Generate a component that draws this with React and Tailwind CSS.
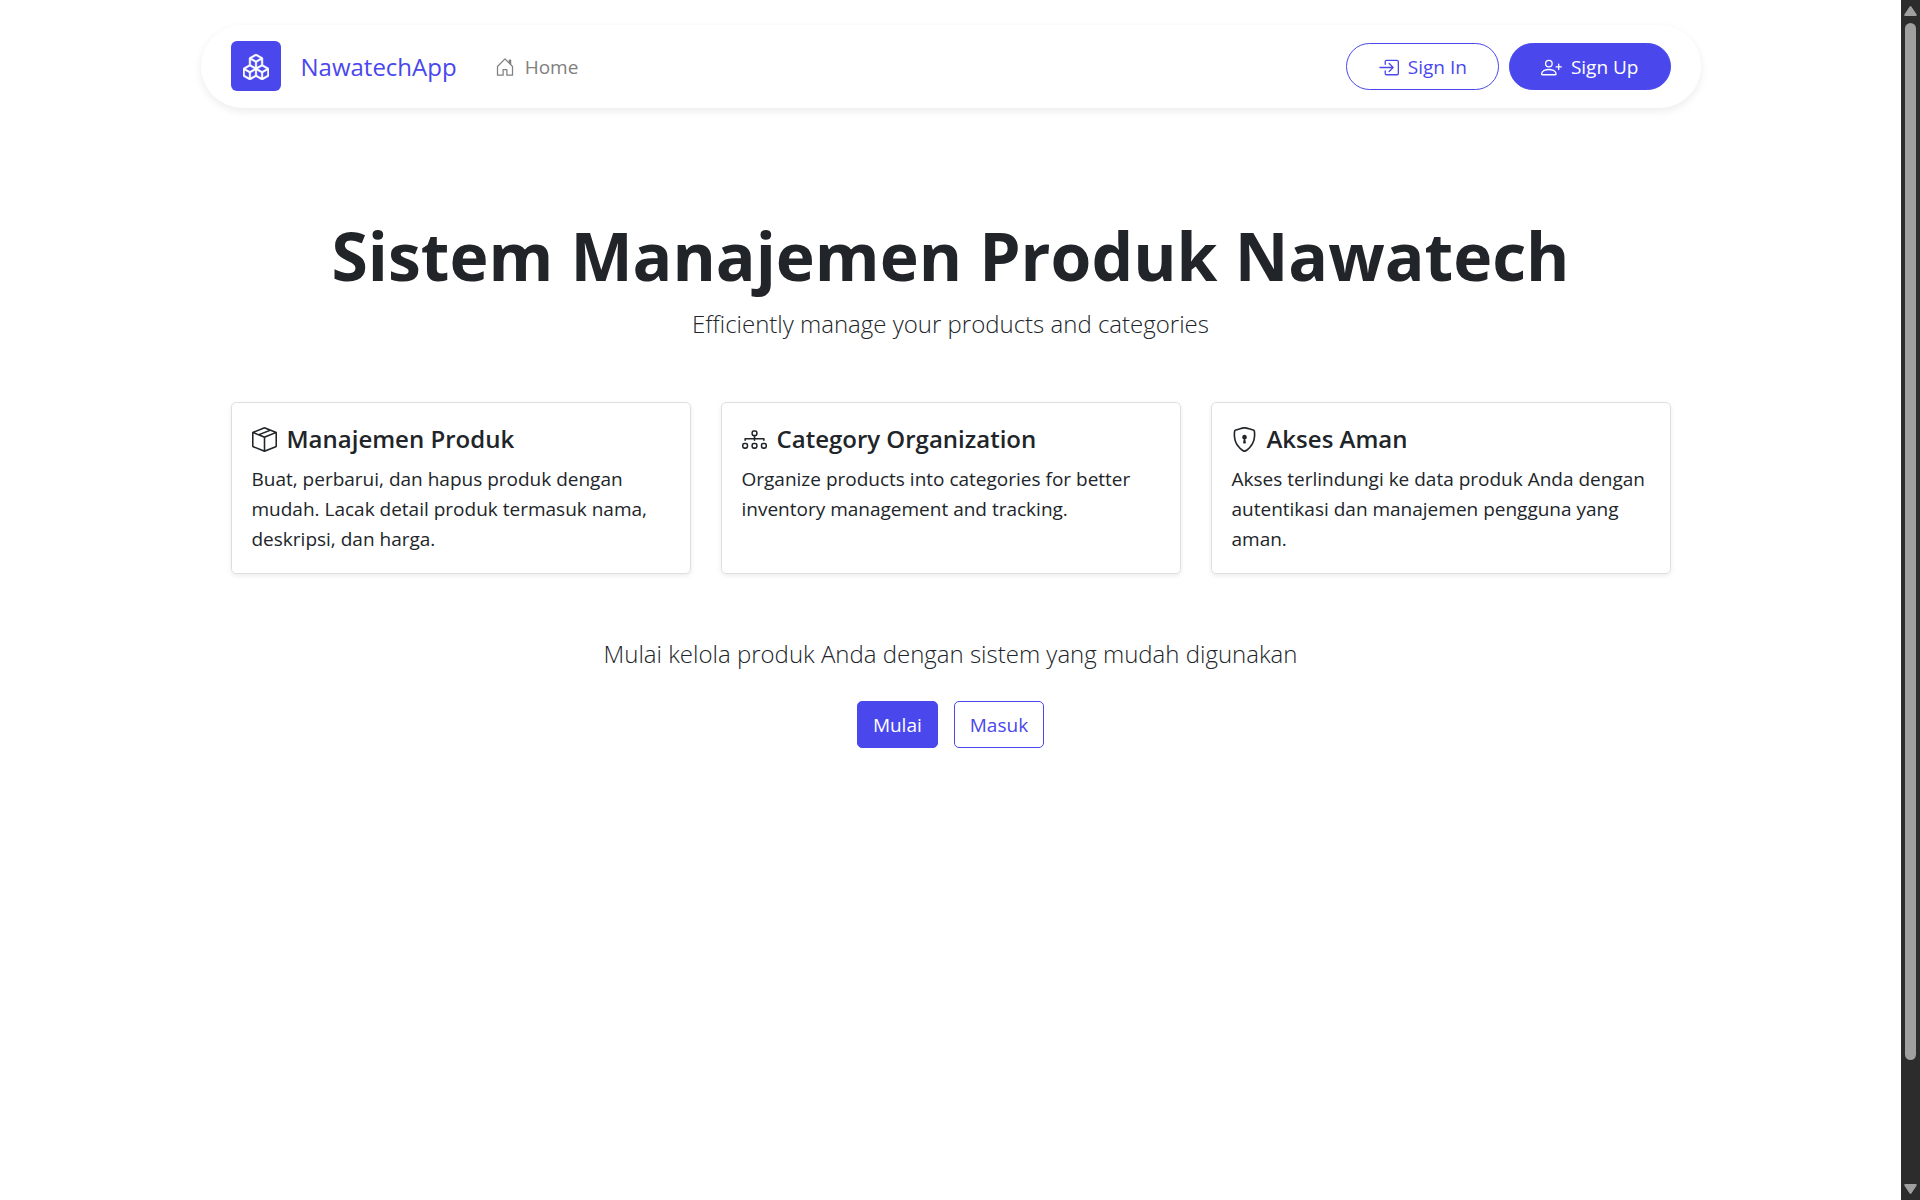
import { BsBoxes, BsHouseDoor, BsBoxArrowInRight, BsPersonPlus, BsBoxSeam, BsDiagram3, BsShieldLock } from "react-icons/bs";

const features = [
  {
    Icon: BsBoxSeam,
    title: "Manajemen Produk",
    text: "Buat, perbarui, dan hapus produk dengan mudah. Lacak detail produk termasuk nama, deskripsi, dan harga.",
  },
  {
    Icon: BsDiagram3,
    title: "Category Organization",
    text: "Organize products into categories for better inventory management and tracking.",
  },
  {
    Icon: BsShieldLock,
    title: "Akses Aman",
    text: "Akses terlindungi ke data produk Anda dengan autentikasi dan manajemen pengguna yang aman.",
  },
];

function Navbar() {
  return (
    <nav className="mx-auto flex w-full max-w-[1500px] items-center rounded-full px-[30px] pt-4 pb-[17px] shadow-[0_3px_8px_rgba(0,0,0,0.08)]">
      <a href="#" className="flex items-center gap-5 text-2xl text-[#4a47ed]">
        <span className="flex size-[50px] items-center justify-center rounded-md bg-[#4a47ed] pt-0.5 text-white">
          <BsBoxes className="size-[26px]" stroke="currentColor" strokeWidth="0.3" />
        </span>
        <span className="pt-0.5">NawatechApp</span>
      </a>
      <a href="#" className="ml-[38px] flex items-center gap-2.5 pt-0.5 text-[19px] text-[#808080]">
        <BsHouseDoor className="size-5" />
        Home
      </a>
      <div className="ml-auto flex gap-2.5 text-[19px] leading-[29px]">
        <a href="#" className="flex items-center gap-[9px] rounded-full border border-[#4a47ed] px-[31px] pt-[9px] pb-[7px] text-[#4a47ed]">
          <BsBoxArrowInRight className="size-[21px]" />
          Sign In
        </a>
        <a href="#" className="flex items-center gap-[9px] rounded-full border border-[#4a47ed] bg-[#4a47ed] px-[31px] pt-[9px] pb-[7px] font-medium text-white">
          <BsPersonPlus className="size-[21px]" />
          Sign Up
        </a>
      </div>
    </nav>
  );
}

function Scrollbar() {
  return (
    <div aria-hidden="true" className="flex w-[19px] shrink-0 flex-col items-center justify-between bg-[#2c2c2c] py-1.5 text-[#9f9f9f]">
      <svg viewBox="0 0 13 10" className="h-2.5 w-[13px]" fill="currentColor">
        <path d="M5.5.8a1.2 1.2 0 0 1 2 0l5 7.4c.6.9 0 1.8-1 1.8h-10c-1 0-1.6-.9-1-1.8z" />
      </svg>
      <div className="mt-[7px] mb-[124px] w-[11px] grow rounded-full bg-[#9f9f9f]" />
      <svg viewBox="0 0 13 10" className="h-2.5 w-[13px]" fill="currentColor">
        <path d="M5.5 9.2a1.2 1.2 0 0 0 2 0l5-7.4c.6-.9 0-1.8-1-1.8h-10c-1 0-1.6.9-1 1.8z" />
      </svg>
    </div>
  );
}

export default function App() {
  return (
    <div className="flex h-screen overflow-hidden bg-white font-['Open_Sans',sans-serif] text-[#212529]">
      <div className="min-w-0 grow pt-[25px]">
        <Navbar />
        <main className="mx-auto max-w-[1500px] px-[30px] pt-[105px] text-center">
          <h1 className="text-[66px] leading-[84px] font-bold">Sistem Manajemen Produk Nawatech</h1>
          <p className="mt-2 text-2xl leading-[38px] font-light">Efficiently manage your products and categories</p>
          <div className="mt-[59px] grid grid-cols-3 gap-[30px] text-left">
            {features.map(({ Icon, title, text }) => (
              <section key={title} className="rounded-[5px] border border-[#dddfe1] px-5 pt-[21px] pb-[19px] shadow-[0_2px_5px_rgba(0,0,0,0.075)]">
                <h2 className="mb-2.5 flex items-center gap-2.5 text-2xl leading-[30px] font-semibold">
                  <Icon className="size-[25px] shrink-0" />
                  {title}
                </h2>
                <p className="text-[19px] leading-[30px]">{text}</p>
              </section>
            ))}
          </div>
          <p className="mt-[61px] text-2xl leading-[38px] font-light">Mulai kelola produk Anda dengan sistem yang mudah digunakan</p>
          <div className="mt-7 flex justify-center gap-4 text-[19px] leading-[29px]">
            <a href="#" className="rounded-[5px] border border-[#4a47ed] bg-[#4a47ed] px-[15px] pt-[9px] pb-[7px] text-white">Mulai</a>
            <a href="#" className="rounded-[5px] border border-[#4a47ed] px-[15px] pt-[9px] pb-[7px] text-[#4a47ed]">Masuk</a>
          </div>
        </main>
      </div>
      <Scrollbar />
    </div>
  );
}
